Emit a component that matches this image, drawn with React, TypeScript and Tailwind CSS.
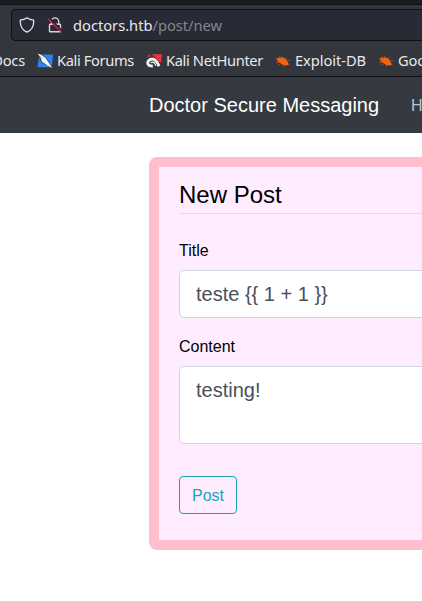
import React from 'react';

function ShieldIcon() {
  return (
    <svg className="h-4 w-4 shrink-0" viewBox="0 0 16 16" fill="none" stroke="#e4e4e8" strokeWidth="1.3" strokeLinejoin="round">
      <path d="M8 .8 C6.3 2.1 3.8 2.9 1.3 3.1 C1 8.5 2.7 13 8 15.2 C13.3 13 15 8.5 14.7 3.1 C12.2 2.9 9.7 2.1 8 .8Z" />
    </svg>
  );
}

function InsecureLockIcon() {
  return (
    <svg className="h-4 w-4 shrink-0" viewBox="0 0 16 16" fill="none">
      <path d="M4.3 7V4.6a3.7 3.7 0 0 1 7.4 0V7M3.3 7.2h9.4q.8 0 .8.8v6q0 .8-.8.8H3.3q-.8 0-.8-.8V8q0-.8.8-.8Z" stroke="#d8d8dc" strokeWidth="1.4" />
      <path d="M2.2 1.3 L15.2 14.3" stroke="#292a35" strokeWidth="2.2" />
      <path d="M1.2 2 L14.5 15.2" stroke="#e3194b" strokeWidth="1.3" />
    </svg>
  );
}

function ForumsIcon() {
  return (
    <svg className="h-4 w-4 shrink-0" viewBox="0 0 16 16">
      <path d="M2.5 1.5H16L14.8 14.3H0.3Z" fill="#2c83f0" />
      <path d="M0 0 4 .3 8.5 4.6 12 8.8 15.4 15.3 11.8 14 8 11.3 4.5 9.5 3 6Z" fill="#24303f" />
      <path d="M.6 .6 4.4 1.8 8.4 5 11.6 9.2 15 15 10.5 12.7 7 10.1 5 8.9 4 6Z" fill="#f4f6f8" />
      <path d="M1.2 1.8 4.8 5.5" stroke="#26313e" strokeWidth=".6" />
    </svg>
  );
}

function NetHunterIcon() {
  return (
    <svg className="h-4 w-4 shrink-0" viewBox="0 0 16 16" fill="none">
      <path d="M5.5 1.3H16L14.8 10 12.5 8 9 4Z" fill="#f4323e" />
      <path d="M1.8 1.8H5L3.5 4.2H1.2Z" fill="#c42b37" />
      <path d="M1.8 12.5 4 14.2H.8Z" fill="#c42b37" />
      <path d="M6.8 13C1.8 13.4 .4 9.8 3 7.4 6.2 4.4 10.4 6.2 13 13.3" stroke="#f2f3f4" strokeWidth="2.8" />
      <path d="M4.8 9.8Q7 8 9 10.7L9.7 12.8" stroke="#f2f3f4" strokeWidth="1.1" />
    </svg>
  );
}

function ExploitIcon() {
  return (
    <svg className="h-4 w-4 shrink-0" viewBox="0 0 16 16" fill="none">
      <path d="M5 5.5 3.7 2.7M7 5 6.2 2.8M2.8 6.7.4 5.2M10 6 12.2 4.8M12 8 15.4 7.4M4 9.2 1 9.7M6 10.5 3.6 12M9 11.8 8 13.5M12.5 10.5 14.5 12.7" stroke="#a85529" strokeWidth=".8" />
      <path d="M2 5.2C3.7 4.2 5 5 6.5 4.5 9.8 4.3 12.4 7 13.9 11.8 10.9 13 7.9 12.7 5.5 10L2.7 8.7Z" fill="#ee6413" />
    </svg>
  );
}

type BookmarkProps = { icon: React.ReactNode; label: string; className: string };

function Bookmark({ icon, label, className }: BookmarkProps) {
  return (
    <div className="flex shrink-0 items-center gap-1">
      <span className="flex pt-0.5">{icon}</span>
      <span className={className}>{label}</span>
    </div>
  );
}

function BrowserChrome() {
  return (
    <header className="h-[77px] border-b border-[#111217] bg-[#33363d] font-['Noto_Sans',sans-serif] text-[#e9e9ed]">
      <div className="h-[5px] border-b border-[#111217] bg-[#1b1c20]" />
      <div className="flex h-9 pt-1 pl-[11px]">
        <div className="flex h-8 w-[440px] shrink-0 items-center rounded border border-[#0e0f15] bg-[#282a36] pl-[7px]">
          <ShieldIcon />
          <span className="ml-3 flex"><InsecureLockIcon /></span>
          <span className="ml-2.5 text-[14.67px] leading-5 whitespace-nowrap">
            doctors.htb<span className="text-[#85868d]">/post/new</span>
          </span>
        </div>
      </div>
      <nav className="flex h-[35px] items-center overflow-hidden pt-[3px] text-[14.67px] leading-5 whitespace-nowrap">
        <div className="flex w-[25px] shrink-0 justify-end tracking-[-0.2px]">Docs</div>
        <div className="ml-3 flex gap-3">
          <Bookmark icon={<ForumsIcon />} label="Kali Forums" className="w-[77px] tracking-[-0.36px]" />
          <Bookmark icon={<NetHunterIcon />} label="Kali NetHunter" className="w-[97px] tracking-[-0.36px]" />
          <Bookmark icon={<ExploitIcon />} label="Exploit-DB" className="w-[71px] tracking-[-0.06px]" />
          <Bookmark icon={<ExploitIcon />} label="Google Hacking DB" className="tracking-[-0.2px]" />
        </div>
      </nav>
    </header>
  );
}

export default function App() {
  return (
    <div className="h-[601px] w-[422px] overflow-hidden bg-white font-['Liberation_Sans',Arial,sans-serif] text-base text-black">
      <BrowserChrome />
      <nav className="flex h-14 items-center bg-[#353a41] pl-[149px] whitespace-nowrap">
        <span className="text-xl text-white">Doctor Secure Messaging</span>
        <a className="ml-8 pt-0.5 text-[#b9c4cc]">Home</a>
      </nav>
      <main className="pt-6 pl-[149px]">
        <section className="w-[600px] rounded-lg border-[10px] border-[#ffbdcd] bg-[#ffedff] px-5 py-2.5">
          <h1 className="mb-6 border-b border-[#dedbe8] text-2xl leading-9">New Post</h1>
          <label className="mb-2 block h-6 leading-[26px]" htmlFor="title">Title</label>
          <input id="title" className="mb-4 block h-12 w-full rounded-[4.8px] border border-[#ced4da] bg-white px-4 py-2 text-xl leading-[30px] text-[#495057] outline-none" defaultValue="teste {{ 1 + 1 }}" />
          <label className="mb-2 block h-6 leading-[26px]" htmlFor="content">Content</label>
          <textarea id="content" className="mb-8 block h-[78px] w-full resize-none rounded-[4.8px] border border-[#ced4da] bg-white px-4 py-2 text-xl leading-[30px] text-[#495057] outline-none" defaultValue="testing!" />
          <button className="mb-4 block h-[38px] rounded border border-[#17a2b8] px-3 pt-0.5 leading-6 text-[#17a2b8]">Post</button>
        </section>
      </main>
    </div>
  );
}
